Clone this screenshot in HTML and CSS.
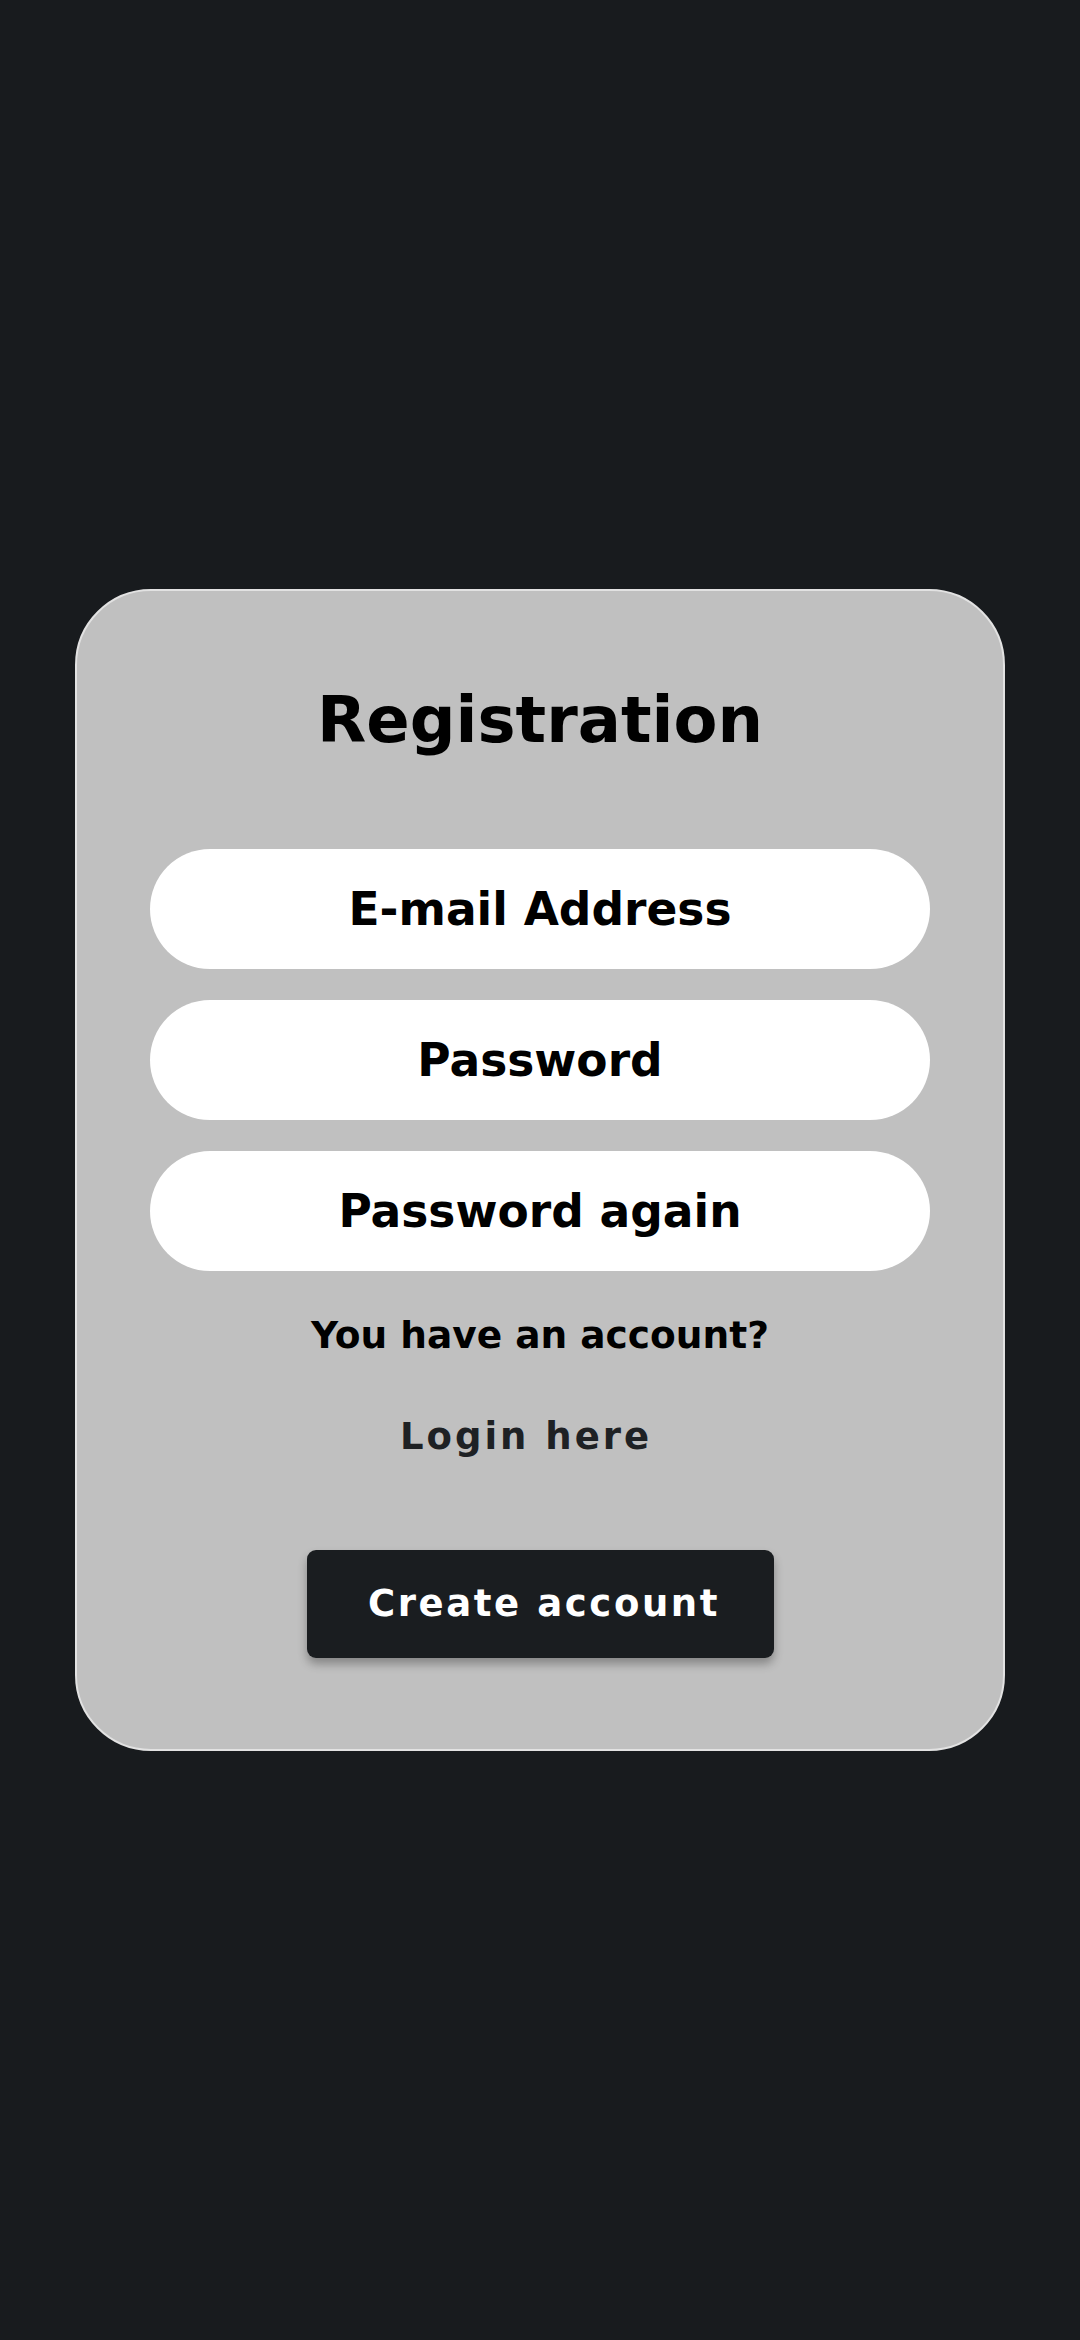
FILE: index.html
```html
<!DOCTYPE html>
<html lang="en">
<head>
<meta charset="utf-8">
<title>Registration</title>
<link rel="stylesheet" href="styles.css">
</head>
<body>
<main class="page">
  <form class="card">
    <h1 class="title">Registration</h1>
    <div class="fields">
      <input class="field" type="email" placeholder="E-mail Address">
      <input class="field" type="password" placeholder="Password">
      <input class="field" type="password" placeholder="Password again">
    </div>
    <p class="question">You have an account?</p>
    <a class="login" href="#">Login here</a>
    <button class="submit" type="button">Create account</button>
  </form>
</main>
</body>
</html>
```

FILE: styles.css
```css
html, body {
  margin: 0;
  padding: 0;
  height: 100%;
}
body {
  background: #181b1e;
  font-family: "DejaVu Sans", "Roboto", sans-serif;
}
.page {
  min-height: 100vh;
  display: flex;
  align-items: center;
  justify-content: center;
}
.card {
  box-sizing: border-box;
  width: 930px;
  height: 1162px;
  background: #c0c0c0;
  border: 2px solid #e2e2e2;
  border-radius: 76px;
  padding: 97px 73px 0;
  display: flex;
  flex-direction: column;
  align-items: center;
}
.title {
  margin: 0;
  font-size: 64px;
  line-height: 1;
  font-weight: 700;
  color: #000;
}
.fields {
  width: 100%;
  margin-top: 97px;
  display: flex;
  flex-direction: column;
  gap: 31px;
}
.field {
  box-sizing: border-box;
  width: 100%;
  height: 120px;
  border: none;
  border-radius: 60px;
  background: #fff;
  text-align: center;
  font-family: inherit;
  font-size: 45.5px;
  font-weight: 700;
  color: #000;
  outline: none;
}
.field::placeholder {
  color: #000;
  opacity: 1;
}
.question {
  margin: 46px 0 0;
  font-size: 37.5px;
  line-height: 1;
  font-weight: 700;
  color: #000;
}
.login {
  margin-top: 63px;
  margin-right: 28px;
  font-size: 37px;
  line-height: 1;
  font-weight: 700;
  letter-spacing: 3px;
  color: #1e2124;
  text-decoration: none;
}
.submit {
  margin-top: 95px;
  width: 467px;
  height: 108px;
  padding: 0 0 0 8px;
  border: none;
  border-radius: 9px;
  background: #1a1d20;
  color: #fff;
  font-family: inherit;
  font-size: 37px;
  font-weight: 700;
  letter-spacing: 2.6px;
  box-shadow: 0 6px 10px rgba(0, 0, 0, 0.3);
}
```
